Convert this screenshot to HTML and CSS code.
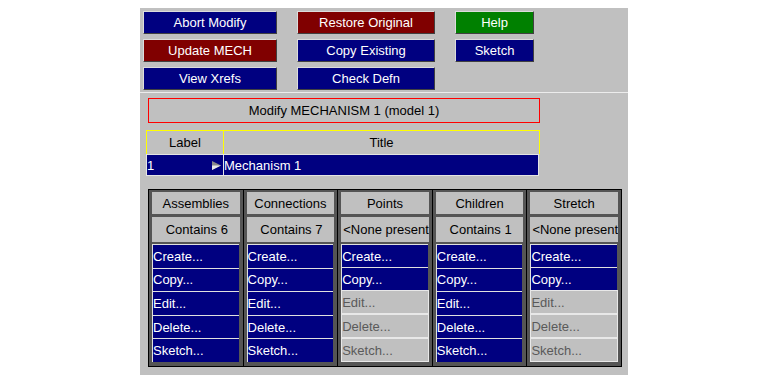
FILE: index.html
```html
<!DOCTYPE html>
<html lang="en">

<head>
    <meta charset="UTF-8">
    <title>Modify MECHANISM</title>
    <link rel="stylesheet" href="styles.css">
</head>

<body>
    <div class="panel">
        <div class="actions">
            <div class="btn navy">Abort Modify</div>
            <div class="btn maroon">Restore Original</div>
            <div class="btn green">Help</div>
            <div class="btn maroon">Update MECH</div>
            <div class="btn navy">Copy Existing</div>
            <div class="btn navy">Sketch</div>
            <div class="btn navy">View Xrefs</div>
            <div class="btn navy">Check Defn</div>
        </div>
        <div class="sep"></div>

        <div class="caption">Modify MECHANISM 1 (model 1)</div>

        <div class="table">
            <div class="thead">
                <div class="th th-label">Label</div>
                <div class="th">Title</div>
            </div>
            <div class="trow">
                <div class="td td-label">
                    <span>1</span>
                    <svg class="arrow" width="9" height="9" viewBox="0 0 9 9">
                        <polygon points="0,0 9,4.5 0,9" fill="#8a8a8a" />
                        <polygon points="0,4.5 9,4.5 0,9" fill="#e8e8e8" />
                    </svg>
                </div>
                <div class="td td-title">Mechanism 1</div>
            </div>
        </div>

        <div class="groups">
            <div class="group">
                <div class="head">Assemblies</div>
                <div class="count">Contains 6</div>
                <div class="ops">
                    <div class="op">Create...</div>
                    <div class="op">Copy...</div>
                    <div class="op">Edit...</div>
                    <div class="op">Delete...</div>
                    <div class="op">Sketch...</div>
                </div>
            </div>
            <div class="group">
                <div class="head">Connections</div>
                <div class="count">Contains 7</div>
                <div class="ops">
                    <div class="op">Create...</div>
                    <div class="op">Copy...</div>
                    <div class="op">Edit...</div>
                    <div class="op">Delete...</div>
                    <div class="op">Sketch...</div>
                </div>
            </div>
            <div class="group">
                <div class="head">Points</div>
                <div class="count">&lt;None present&gt;</div>
                <div class="ops">
                    <div class="op">Create...</div>
                    <div class="op">Copy...</div>
                    <div class="op off">Edit...</div>
                    <div class="op off">Delete...</div>
                    <div class="op off">Sketch...</div>
                </div>
            </div>
            <div class="group">
                <div class="head">Children</div>
                <div class="count">Contains 1</div>
                <div class="ops">
                    <div class="op">Create...</div>
                    <div class="op">Copy...</div>
                    <div class="op">Edit...</div>
                    <div class="op">Delete...</div>
                    <div class="op">Sketch...</div>
                </div>
            </div>
            <div class="group">
                <div class="head">Stretch</div>
                <div class="count">&lt;None present&gt;</div>
                <div class="ops">
                    <div class="op">Create...</div>
                    <div class="op">Copy...</div>
                    <div class="op off">Edit...</div>
                    <div class="op off">Delete...</div>
                    <div class="op off">Sketch...</div>
                </div>
            </div>
        </div>
    </div>
</body>

</html>
```

FILE: styles.css
```css
body {
    margin: 0;
    background: #fff;
    font-family: "Liberation Sans", Arial, sans-serif;
    font-size: 13px;
}

.panel {
    width: 488px;
    height: 367px;
    margin: 8px 0 0 140px;
    background: #c0c0c0;
    box-sizing: border-box;
    padding-top: 3px;
}

/* top button block */
.actions {
    display: grid;
    grid-template-columns: 134px 138px 79px;
    grid-auto-rows: 23px;
    column-gap: 20px;
    row-gap: 5px;
    padding-left: 3px;
}

.btn {
    display: flex;
    align-items: center;
    justify-content: center;
    color: #fff;
    border: 1px solid;
    border-color: #dcdcdc #404040 #404040 #dcdcdc;
    white-space: nowrap;
}

.navy {
    background: #000080;
}

.maroon {
    background: #800000;
}

.green {
    background: #008000;
}

.sep {
    height: 1px;
    margin-top: 2px;
    background: #ececec;
}

.caption {
    width: 392px;
    height: 25px;
    margin: 5px 0 0 8px;
    box-sizing: border-box;
    border: 1px solid #ff0000;
    display: flex;
    align-items: center;
    justify-content: center;
    color: #000;
}

/* label / title table */
.table {
    width: 394px;
    margin: 7px 0 0 6px;
}

.thead {
    display: grid;
    grid-template-columns: 77px 1fr;
    height: 24px;
    box-sizing: border-box;
    border: 1px solid #ffff00;
    border-bottom: none;
}

.th {
    display: flex;
    align-items: center;
    justify-content: center;
}

.th-label {
    border-right: 1px solid #ffff00;
}

.trow {
    display: grid;
    grid-template-columns: 77px 1fr;
    width: 393px;
    height: 22px;
}

.td {
    background: #000080;
    color: #fff;
    display: flex;
    align-items: center;
    box-sizing: border-box;
    border: 1px solid #e4e4e4;
}

.td-label {
    border-right: none;
    justify-content: space-between;
    padding-right: 2px;
}

.arrow {
    display: block;
}

/* object groups */
.groups {
    display: grid;
    grid-template-columns: repeat(5, minmax(0, 1fr));
    gap: 1px;
    width: 474px;
    height: 178px;
    margin: 13px 0 0 8px;
    box-sizing: border-box;
    border: 1px solid #000;
    background: #000;
}

.group {
    min-width: 0;
    background: #555;
    padding: 2px 3px 4px 3px;
    display: flex;
    flex-direction: column;
}

.head,
.count {
    background: #c0c0c0;
    color: #000;
    display: flex;
    align-items: center;
    justify-content: center;
    white-space: nowrap;
    overflow: hidden;
}

.head {
    height: 22px;
}

.count {
    height: 25px;
    margin-top: 3px;
    padding-left: 2px;
    justify-content: safe center;
}

.ops {
    flex: 1;
    margin-top: 2px;
    display: flex;
    flex-direction: column;
}

.op {
    flex: 1;
    display: flex;
    align-items: center;
    background: #000080;
    color: #fff;
    box-sizing: border-box;
    border-top: 1px solid #e0e0e0;
    border-left: 1px solid #e0e0e0;
    margin-right: 1px;
}

.op.off {
    background: #c0c0c0;
    color: #5a5a5a;
    border: 1px solid #e8e8e8;
    margin-right: 0;
}
```
